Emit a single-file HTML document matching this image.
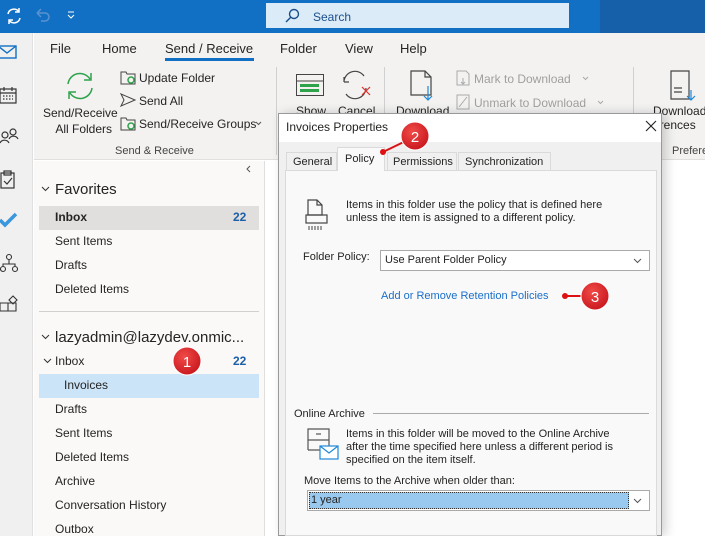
<!DOCTYPE html><html><head><style>
*{margin:0;padding:0;box-sizing:border-box}
body{width:705px;height:536px;overflow:hidden;position:relative;font-family:"Liberation Sans",sans-serif;background:#fff;color:#252423}
.a{position:absolute;white-space:nowrap}
.f12{font-size:12px}.f11{font-size:11px}
</style></head><body>
<!-- title bar -->
<div class="a" style="left:0;top:0;width:705px;height:33px;background:#1170c4"></div>
<div class="a" style="left:600px;top:0;width:105px;height:33px;background:#1560a8"></div>
<svg class="a" style="left:4px;top:6px" width="20" height="20" viewBox="0 0 20 20" fill="none" stroke="#fff" stroke-width="1.5"><path d="M4 8a6 6 0 0 1 11-2M16 12a6 6 0 0 1-11 2M15 2v4h-4M5 18v-4h4"/></svg>
<svg class="a" style="left:34px;top:7px" width="18" height="16" fill="none" stroke="#5a92cf" stroke-width="1.5"><path d="M3 6h8a4 4 0 0 1 0 8H7M3 6l4-4M3 6l4 4"/></svg>
<svg class="a" style="left:67px;top:11px" width="8" height="8" fill="none" stroke="#fff"><path d="M1 1h6M1 4l3 3 3-3"/></svg>
<div class="a" style="left:266px;top:3px;width:303px;height:25px;background:#dcebf8"></div>
<svg class="a" style="left:284px;top:8px" width="16" height="16" fill="none" stroke="#1a4f8a" stroke-width="1.4"><circle cx="10" cy="6" r="4.5"/><path d="M7 9l-5 5"/></svg>
<div class="a f12" style="left:313px;top:10px;color:#1a4f8a">Search</div>
<!-- left rail -->
<div class="a" style="left:0;top:33px;width:33px;height:503px;background:#f0f0f0;border-right:1px solid #e0e0e0"></div>
<svg class="a" style="left:0;top:44px" width="20" height="16" fill="none" stroke="#1170c4" stroke-width="1.4"><rect x="-2" y="2" width="18" height="12"/><path d="M-2 2l9 7 9-7"/></svg>
<svg class="a" style="left:0;top:86px" width="18" height="18" fill="none" stroke="#333" stroke-width="1.2"><rect x="0" y="3" width="16" height="14"/><path d="M0 7h16M4 1v4M12 1v4"/><path d="M3 10h10M3 13h10" stroke-dasharray="1.5 1.5"/></svg>
<svg class="a" style="left:0;top:127px" width="20" height="18" fill="none" stroke="#333" stroke-width="1.2"><circle cx="5" cy="8" r="3"/><circle cx="13" cy="5" r="3"/><path d="M0 16a5 5 0 0 1 9 0M9 12a5 5 0 0 1 9 0"/></svg>
<svg class="a" style="left:0;top:170px" width="18" height="20" fill="none" stroke="#333" stroke-width="1.2"><rect x="1" y="3" width="13" height="15"/><rect x="4" y="1" width="7" height="4"/><path d="M4 11l3 3 5-6"/></svg>
<svg class="a" style="left:0;top:212px" width="20" height="16"><path d="M0 8l5 5 11-11" fill="none" stroke="#3a96dd" stroke-width="3.5"/></svg>
<svg class="a" style="left:0;top:253px" width="18" height="20" fill="none" stroke="#333" stroke-width="1.1"><circle cx="9" cy="4" r="2.5"/><circle cx="3" cy="16" r="2.5"/><circle cx="15" cy="16" r="2.5"/><path d="M9 7v4M3 13v-2h12v2"/></svg>
<svg class="a" style="left:0;top:295px" width="20" height="20" fill="none" stroke="#333" stroke-width="1.1"><path d="M0 8h8v8H0M8 8h8v8H8M0 8v8"/><path d="M13 1l4 4-4 4-4-4z"/></svg>
<!-- tab row -->
<div class="a" style="left:34px;top:33px;width:671px;height:127px;background:#f3f2f1;border-bottom:1px solid #e1dfdd"></div>
<div class="a" style="left:50px;top:41px;font-size:13px">File</div>
<div class="a" style="left:102px;top:41px;font-size:13px">Home</div>
<div class="a" style="left:165px;top:41px;font-size:13px">Send / Receive</div>
<div class="a" style="left:165px;top:58px;width:89px;height:3px;background:#1170c4"></div>
<div class="a" style="left:280px;top:41px;font-size:13px">Folder</div>
<div class="a" style="left:345px;top:41px;font-size:13px">View</div>
<div class="a" style="left:400px;top:41px;font-size:13px">Help</div>
<!-- ribbon -->
<svg class="a" style="left:64px;top:70px" width="32" height="32" fill="none" stroke="#2fa34c" stroke-width="1.5"><path d="M4 14a12 12 0 0 1 22-5M28 18a12 12 0 0 1-22 5M27 3v7h-7M5 29v-7h7"/></svg>
<div class="a f12" style="left:43px;top:105px;text-align:center;line-height:16px">Send/Receive<br>&nbsp;&nbsp;All Folders</div>
<svg class="a" style="left:120px;top:70px" width="16" height="15" fill="none" stroke="#444"><path d="M1 2h5l1 2h8v10H1z"/><circle cx="11" cy="10" r="3" stroke="#2fa34c" stroke-width="1.5"/></svg>
<div class="a f12" style="left:139px;top:71px">Update Folder</div>
<svg class="a" style="left:120px;top:93px" width="16" height="14" fill="none" stroke="#444"><path d="M1 1l14 6-14 6 3-6z"/></svg>
<div class="a f12" style="left:139px;top:94px">Send All</div>
<svg class="a" style="left:120px;top:116px" width="16" height="15" fill="none" stroke="#444"><path d="M1 2h5l1 2h8v10H1z"/><circle cx="11" cy="10" r="3" stroke="#2fa34c" stroke-width="1.5"/></svg>
<div class="a f12" style="left:139px;top:117px">Send/Receive Groups</div>
<svg class="a" style="left:255px;top:121px" width="7" height="5" fill="none" stroke="#555"><path d="M1 1l2.5 2.5L6 1"/></svg>
<div class="a f11" style="left:115px;top:145px;color:#444">Send &amp; Receive</div>
<div class="a" style="left:276px;top:67px;width:1px;height:88px;background:#d0d0d0"></div>
<svg class="a" style="left:296px;top:74px" width="28" height="22" fill="none" stroke="#444"><rect x="0.5" y="0.5" width="27" height="21"/><path d="M1 7h26"/><rect x="4" y="10" width="19" height="3" fill="#2fa34c" stroke="none"/><rect x="4" y="15" width="19" height="3" fill="#2fa34c" stroke="none"/></svg>
<div class="a f12" style="left:296px;top:104px">Show</div>
<svg class="a" style="left:341px;top:70px" width="32" height="30" fill="none" stroke="#444" stroke-width="1.2"><path d="M3 12a11 11 0 0 1 20-6M3 12l0-5M3 12l5 0M25 18a11 11 0 0 1-20 6"/><path d="M21 17l8 8M29 17l-8 8" stroke="#e0302a"/></svg>
<div class="a f12" style="left:338px;top:104px">Cancel</div>
<div class="a" style="left:384px;top:67px;width:1px;height:88px;background:#d0d0d0"></div>
<svg class="a" style="left:410px;top:70px" width="24" height="32" fill="none" stroke="#444" stroke-width="1.2"><path d="M1 1h14l6 6v18H1z"/><path d="M15 1v6h6"/><path d="M18 16v14M14 26l4 4 4-4" stroke="#1e88d8"/></svg>
<div class="a f12" style="left:396px;top:104px">Download</div>
<svg class="a" style="left:456px;top:70px" width="14" height="16" fill="none" stroke="#aaa"><path d="M1 1h9l3 3v11H1z"/><path d="M7 8v6M5 12l2 2 2-2"/></svg>
<div class="a f12" style="left:474px;top:72px;color:#a19f9d">Mark to Download</div>
<svg class="a" style="left:582px;top:76px" width="7" height="5" fill="none" stroke="#aaa"><path d="M1 1l2.5 2.5L6 1"/></svg>
<svg class="a" style="left:456px;top:94px" width="14" height="16" fill="none" stroke="#aaa"><rect x="1" y="1" width="12" height="14"/><path d="M3 13l8-10"/></svg>
<div class="a f12" style="left:474px;top:96px;color:#a19f9d">Unmark to Download</div>
<svg class="a" style="left:597px;top:100px" width="7" height="5" fill="none" stroke="#aaa"><path d="M1 1l2.5 2.5L6 1"/></svg>
<div class="a" style="left:633px;top:67px;width:1px;height:88px;background:#d0d0d0"></div>
<svg class="a" style="left:670px;top:70px" width="26" height="32" fill="none" stroke="#444" stroke-width="1.2"><path d="M1 1h18v28H1z"/><path d="M4 18h8M4 22h8"/><path d="M21 20v10M17 26l4 4 4-4" stroke="#1e88d8"/></svg>
<div class="a f12" style="left:653px;top:104px;line-height:14px">Download<br>erences</div>
<div class="a f11" style="left:672px;top:145px;color:#444">Prefere</div>
<!-- folder pane -->
<div class="a" style="left:34px;top:161px;width:231px;height:375px;background:#faf9f8;border-right:1px solid #e1dfdd"></div>
<svg class="a" style="left:246px;top:165px" width="5" height="8" fill="none" stroke="#555"><path d="M4 1L1 4l3 3"/></svg>
<svg class="a" style="left:41px;top:186px" width="9" height="6" fill="none" stroke="#333"><path d="M1 1l3.5 3.5L8 1"/></svg>
<div class="a" style="left:55px;top:181px;font-size:15px">Favorites</div>
<div class="a" style="left:39px;top:206px;width:220px;height:24px;background:#e1dfdd"></div>
<div class="a f12" style="left:55px;top:210px;font-weight:bold">Inbox</div>
<div class="a f12" style="left:233px;top:210px;font-weight:bold;color:#1c5fa8">22</div>
<div class="a f12" style="left:55px;top:234px">Sent Items</div>
<div class="a f12" style="left:55px;top:258px">Drafts</div>
<div class="a f12" style="left:55px;top:282px">Deleted Items</div>
<div class="a" style="left:39px;top:311px;width:220px;height:1px;background:#d2d0ce"></div>
<svg class="a" style="left:41px;top:334px" width="9" height="6" fill="none" stroke="#333"><path d="M1 1l3.5 3.5L8 1"/></svg>
<div class="a" style="left:55px;top:329px;font-size:15px">lazyadmin@lazydev.onmic...</div>
<svg class="a" style="left:43px;top:358px" width="9" height="6" fill="none" stroke="#333"><path d="M1 1l3.5 3.5L8 1"/></svg>
<div class="a f12" style="left:55px;top:354px">Inbox</div>
<div class="a f12" style="left:233px;top:354px;font-weight:bold;color:#1c5fa8">22</div>
<div class="a" style="left:39px;top:374px;width:220px;height:24px;background:#cce4f7"></div>
<div class="a f12" style="left:64px;top:378px">Invoices</div>
<div class="a f12" style="left:55px;top:402px">Drafts</div>
<div class="a f12" style="left:55px;top:426px">Sent Items</div>
<div class="a f12" style="left:55px;top:450px">Deleted Items</div>
<div class="a f12" style="left:55px;top:474px">Archive</div>
<div class="a f12" style="left:55px;top:498px">Conversation History</div>
<div class="a f12" style="left:55px;top:522px">Outbox</div>
<!-- dialog -->
<div class="a" style="left:278px;top:113px;width:384px;height:423px;background:#f0f0f0;border:1px solid #999;box-shadow:4px 0 10px rgba(0,0,0,.18)"></div>
<div class="a" style="left:279px;top:114px;width:382px;height:28px;background:#fff"></div>
<div class="a f12" style="left:286px;top:120px">Invoices Properties</div>
<svg class="a" style="left:645px;top:120px" width="12" height="12" stroke="#222" stroke-width="1.1"><path d="M1 1l10 10M11 1L1 11"/></svg>
<div class="a" style="left:285px;top:170px;width:372px;height:366px;background:#f9f9f9;border:1px solid #dadada"></div>
<div class="a f11" style="left:286px;top:152px;width:51px;height:19px;border:1px solid #dadada;background:#f0f0f0;padding:3px 0 0 6px">General</div>
<div class="a f11" style="left:337px;top:147px;width:48px;height:24px;border:1px solid #dadada;border-bottom:none;background:#f9f9f9;padding:5px 0 0 7px">Policy</div>
<div class="a f11" style="left:387px;top:152px;width:70px;height:19px;border:1px solid #dadada;background:#f0f0f0;padding:3px 0 0 5px">Permissions</div>
<div class="a f11" style="left:458px;top:152px;width:93px;height:19px;border:1px solid #dadada;background:#f0f0f0;padding:3px 0 0 6px">Synchronization</div>
<svg class="a" style="left:305px;top:199px" width="28" height="32" fill="none" stroke="#444" stroke-width="1.2"><path d="M3 1h9l5 5v10H3z"/><path d="M12 1v5h5"/><rect x="1" y="16" width="21" height="8"/><path d="M4 27v4M7 27v4M10 27v4M13 27v4M16 27v4" stroke-width="1"/></svg>
<div class="a f11" style="left:346px;top:199px;line-height:13px">Items in this folder use the policy that is defined here<br>unless the item is assigned to a different policy.</div>
<div class="a f11" style="left:303px;top:251px">Folder Policy:</div>
<div class="a" style="left:380px;top:250px;width:270px;height:21px;background:#fff;border:1px solid #aaa"></div>
<div class="a f11" style="left:385px;top:254px">Use Parent Folder Policy</div>
<svg class="a" style="left:633px;top:258px" width="9" height="6" fill="none" stroke="#555"><path d="M1 1l3.5 3.5L8 1"/></svg>
<div class="a f11" style="left:381px;top:290px;color:#1a6fc9">Add or Remove Retention Policies</div>
<div class="a f11" style="left:294px;top:408px">Online Archive</div>
<div class="a" style="left:373px;top:413px;width:276px;height:1px;background:#aaa"></div>
<svg class="a" style="left:307px;top:428px" width="32" height="36" fill="none" stroke="#555" stroke-width="1.2"><path d="M1 22V1h21v17M1 12h21M1 22h12"/><path d="M9 6h5"/><rect x="13" y="18" width="18" height="13" fill="#fff" stroke="#1e88d8"/><path d="M13 18l9 7 9-7" stroke="#1e88d8"/></svg>
<div class="a f11" style="left:346px;top:428px;line-height:13px">Items in this folder will be moved to the Online Archive<br>after the time specified here unless a different period is<br>specified on the item itself.</div>
<div class="a f11" style="left:304px;top:475px">Move Items to the Archive when older than:</div>
<div class="a" style="left:307px;top:490px;width:343px;height:21px;background:#fff;border:1px solid #aaa"></div>
<div class="a" style="left:309px;top:492px;width:320px;height:17px;background:#99c9ef;border:1px dotted #333"></div>
<div class="a f11" style="left:311px;top:494px">1 year</div>
<svg class="a" style="left:633px;top:498px" width="9" height="6" fill="none" stroke="#555"><path d="M1 1l3.5 3.5L8 1"/></svg>
<!-- red markers -->
<svg class="a" style="left:0;top:0" width="705" height="536">
<defs><radialGradient id="g" cx=".4" cy=".35" r=".7"><stop offset="0" stop-color="#f04a48"/><stop offset="1" stop-color="#c8161d"/></radialGradient></defs>
<line x1="383" y1="152" x2="412" y2="138" stroke="#d11" stroke-width="2"/><circle cx="383" cy="152" r="3" fill="#d11"/>
<line x1="565" y1="296" x2="592" y2="296" stroke="#d11" stroke-width="2"/><circle cx="565" cy="296" r="3" fill="#d11"/>
<g font-family="Liberation Sans" font-size="15" fill="#fff" text-anchor="middle">
<circle cx="187" cy="361" r="14" fill="url(#g)" stroke="#fff" stroke-width="1"/><text x="187" y="367">1</text>
<circle cx="415" cy="136" r="14" fill="url(#g)" stroke="#fff" stroke-width="1"/><text x="415" y="142">2</text>
<circle cx="595" cy="296" r="14" fill="url(#g)" stroke="#fff" stroke-width="1"/><text x="595" y="302">3</text>
</g></svg>
</body></html>
